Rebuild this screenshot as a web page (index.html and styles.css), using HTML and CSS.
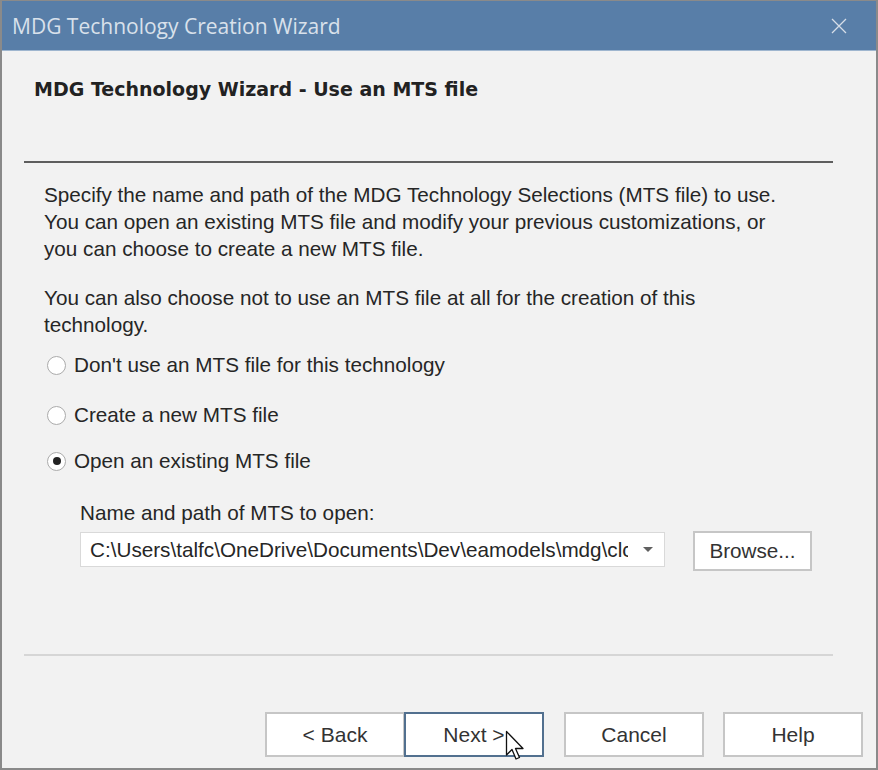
FILE: index.html
```html
<!DOCTYPE html>
<html>
<head>
<meta charset="utf-8">
<link rel="stylesheet" href="styles.css">
</head>
<body>
<div class="window">
  <div class="titlebar">
    <span class="title">MDG Technology Creation Wizard</span>
    <svg class="close" width="16" height="16" viewBox="0 0 16 16"><path d="M1 1 L15 15 M15 1 L1 15" stroke="#d6dee8" stroke-width="1.3" fill="none"/></svg>
  </div>
  <div class="body">
    <div class="header">MDG Technology Wizard - Use an MTS file</div>
    <div class="sep-dark"></div>
    <div class="content">
      <p class="para p1">Specify the name and path of the MDG Technology Selections (MTS file) to use.<br>You can open an existing MTS file and modify your previous customizations, or<br>you can choose to create a new MTS file.</p>
      <p class="para p2">You can also choose not to use an MTS file at all for the creation of this<br>technology.</p>
      <div class="radio r1"><span class="circle"></span><span>Don't use an MTS file for this technology</span></div>
      <div class="radio r2"><span class="circle"></span><span>Create a new MTS file</span></div>
      <div class="radio r3"><span class="circle checked"></span><span>Open an existing MTS file</span></div>
      <div class="sub">
        <div class="label">Name and path of MTS to open:</div>
        <div class="row">
          <div class="combo"><span class="combo-text">C:\Users\talfc\OneDrive\Documents\Dev\eamodels\mdg\clc</span><span class="arrow"></span></div>
          <div class="btn browse">Browse...</div>
        </div>
      </div>
    </div>
    <div class="sep-light"></div>
    <div class="buttons">
      <div class="btn wide">&lt; Back</div>
      <div class="btn wide focus">Next &gt;
        <svg class="cursor" width="22" height="34" viewBox="0 0 22 34"><path d="M1.5 1.5 L1.5 25 L7 19.5 L11 29 L14.5 27.5 L10.5 18.5 L18 18.5 Z" fill="#fff" stroke="#111" stroke-width="1.3" stroke-linejoin="round"/></svg>
      </div>
      <div class="btn wide cancel">Cancel</div>
      <div class="btn wide help">Help</div>
    </div>
  </div>
</div>
</body>
</html>
```
FILE: styles.css
```css
html, body {
  margin: 0;
  padding: 0;
  background: #f2f2f2;
}
.window {
  width: 878px;
  height: 770px;
  box-sizing: border-box;
  border-style: solid;
  border-color: #8a8a8a;
  border-width: 1px 2px 2px 2px;
  background: #f2f2f2;
  display: flex;
  flex-direction: column;
  font-family: "Liberation Sans", Arial, sans-serif;
  color: #262626;
}
.titlebar {
  height: 49px;
  flex: none;
  background: #587ea8;
  border-bottom: 1px solid #9fb6cf;
  display: flex;
  align-items: center;
  justify-content: space-between;
  padding: 0 29px 0 10px;
}
.title {
  font-family: "Open Sans", "Noto Sans", sans-serif;
  font-size: 21px;
  color: #d9e1eb;
}
.close {
  display: block;
}
.body {
  flex: 1;
  display: flex;
  flex-direction: column;
}
.header {
  margin: 27px 0 0 32px;
  font-family: "DejaVu Sans", sans-serif;
  font-weight: bold;
  font-size: 19px;
  line-height: 22px;
  color: #222;
}
.sep-dark {
  margin: 61px 43px 0 22px;
  height: 2px;
  background: #5e5e5e;
}
.content {
  padding-left: 42px;
  font-size: 20.7px;
}
.para {
  margin: 0;
  line-height: 27px;
}
.p1 {
  margin-top: 18px;
}
.p2 {
  margin-top: 22px;
}
.radio {
  display: flex;
  align-items: center;
  gap: 8px;
  height: 30px;
  margin-left: 3px;
}
.r1 { margin-top: 12px; }
.r2 { margin-top: 20px; }
.r3 { margin-top: 16px; }
.circle {
  width: 19px;
  height: 19px;
  box-sizing: border-box;
  border: 1.5px solid #ababab;
  border-radius: 50%;
  background: #fff;
  display: flex;
  align-items: center;
  justify-content: center;
}
.circle.checked::after {
  content: "";
  width: 8px;
  height: 8px;
  border-radius: 50%;
  background: #222;
}
.sub {
  margin-left: 36px;
}
.label {
  margin-top: 24px;
  line-height: 26px;
}
.row {
  display: flex;
  align-items: flex-start;
  gap: 28px;
  margin-top: 5px;
}
.combo {
  margin-top: 1px;
  width: 585px;
  height: 35px;
  box-sizing: border-box;
  border: 1px solid #d9d9d9;
  background: #fff;
  display: flex;
  align-items: center;
  padding: 0 11px 0 9px;
}
.combo-text {
  flex: 1;
  overflow: hidden;
  white-space: nowrap;
}
.arrow {
  flex: none;
  width: 0;
  height: 0;
  border-left: 5px solid transparent;
  border-right: 5px solid transparent;
  border-top: 5px solid #606060;
  margin-left: 15px;
}
.btn {
  box-sizing: border-box;
  border: 2px solid #c6c6c6;
  background: #fff;
  display: flex;
  align-items: center;
  justify-content: center;
  font-size: 21px;
  color: #333;
}
.browse {
  width: 119px;
  height: 40px;
  font-size: 20.7px;
}
.sep-light {
  margin: 83px 43px 0 22px;
  height: 2px;
  background: #d6d6d6;
}
.buttons {
  display: flex;
  justify-content: flex-end;
  margin: 56px 13px 0 0;
}
.wide {
  width: 140px;
  height: 45px;
}
.focus {
  border-color: #52708f;
  position: relative;
  margin-left: -1px;
}
.cancel {
  margin-left: 20px;
}
.help {
  margin-left: 19px;
}
.cursor {
  position: absolute;
  left: 99px;
  top: 16px;
}
```
